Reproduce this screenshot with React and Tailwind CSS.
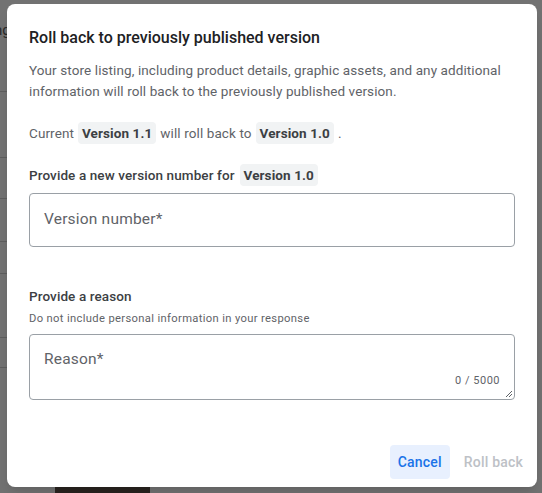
const rows = [91, 157, 198, 241, 273, 337, 367];

function Chip({ children }) {
  return (
    <span className="inline-flex items-center h-[22px] px-[4px] rounded bg-[#f1f3f4] font-bold text-[#3c4043]">
      {children}
    </span>
  );
}

export default function App() {
  return (
    <div className="relative w-[542px] h-[493px] overflow-hidden bg-[#727272] font-['Roboto',sans-serif]">
      {/* page behind the scrim */}
      <div className="absolute inset-0">
        <div className="absolute left-[-6px] top-[19px] text-[15px] text-[#2a2a2a]">ng</div>
        {rows.map((y) => (
          <div key={y} className="absolute left-0 w-[10px] h-px bg-[#5e5e5e]" style={{ top: y }} />
        ))}
        <div className="absolute left-[55px] top-[487px] w-[95px] h-[10px] bg-[#2a2420]" />
      </div>

      {/* dialog */}
      <div className="absolute left-[7px] top-[4px] w-[530px] h-[483px] rounded-lg bg-white shadow-lg flex flex-col px-[22px] pt-[22px]">
        <h2 className="text-[16px] leading-[24px] font-medium text-[#202124]">
          Roll back to previously published version
        </h2>

        <p className="mt-[10px] text-[13.5px] leading-[21px] text-[#5f6368] tracking-[0.1px]">
          Your store listing, including product details, graphic assets, and any additional information will roll back to the previously published version.
        </p>

        <div className="mt-[20px] flex items-center gap-[4px] text-[13.5px] text-[#5f6368] tracking-[0.1px]">
          <span>Current</span>
          <Chip>Version 1.1</Chip>
          <span>will roll back to</span>
          <Chip>Version 1.0</Chip>
          <span>.</span>
        </div>

        <div className="mt-[20px] flex items-center gap-[5px] text-[13.5px] text-[#3c4043] font-medium tracking-[0.1px]">
          <span>Provide a new version number for</span>
          <Chip>Version 1.0</Chip>
        </div>

        <div className="mt-[7px] h-[54px] rounded border border-[#9aa0a6] flex items-center px-[14px] text-[15.5px] text-[#5f6368] tracking-[0.2px]">
          Version number*
        </div>

        <div className="mt-[39px] text-[13.5px] leading-[20px] font-medium text-[#3c4043] tracking-[0.1px]">
          Provide a reason
        </div>
        <div className="mt-[5px] text-[11.2px] leading-[16px] text-[#5f6368] tracking-[0.35px]">
          Do not include personal information in your response
        </div>

        <div className="relative mt-[7px] h-[66px] rounded border border-[#9aa0a6] px-[14px] pt-[13px] text-[15.5px] text-[#5f6368] tracking-[0.2px]">
          Reason*
          <span className="absolute right-[14px] bottom-[11px] text-[11px] leading-[14px] text-[#5f6368] tracking-[0.5px]">
            0 / 5000
          </span>
          <svg className="absolute right-[1px] bottom-[1px]" width="8" height="8" viewBox="0 0 8 8">
            <path d="M7 1 L1 7 M7 4 L4 7" stroke="#5f6368" strokeWidth="1" />
          </svg>
        </div>

        <div className="mt-auto mb-[8px] flex justify-end items-center gap-[6px] -mr-[16px]">
          <button className="h-[34px] px-[8px] rounded bg-[#e8f0fe] text-[14px] font-medium text-[#1a73e8] tracking-[0.2px]">
            Cancel
          </button>
          <button className="h-[34px] px-[8px] rounded text-[14px] font-medium text-[#bdc1c6] tracking-[0.2px]">
            Roll back
          </button>
        </div>
      </div>
    </div>
  );
}
